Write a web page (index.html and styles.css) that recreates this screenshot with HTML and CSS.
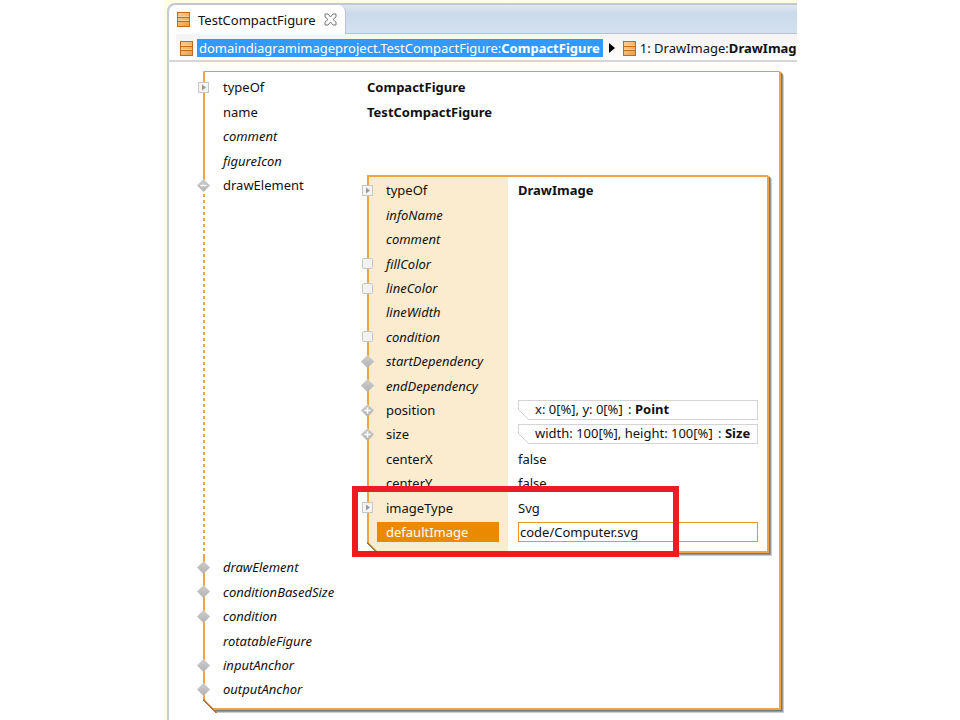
FILE: index.html
```html
<!DOCTYPE html>
<html lang="en">

<head>
  <meta charset="UTF-8">
  <meta name="viewport" content="width=device-width">
  <title>TestCompactFigure</title>
  <link rel="stylesheet" href="styles.css">
</head>

<body>

  <svg class="symbols" aria-hidden="true">
    <defs>
      <linearGradient id="sheet" x1="0" y1="0" x2="1" y2="1">
        <stop offset="0" stop-color="#fbd09a" />
        <stop offset="1" stop-color="#ee9c40" />
      </linearGradient>
      <linearGradient id="grey" x1="0" y1="0" x2="0" y2="1">
        <stop offset="0" stop-color="#cecece" />
        <stop offset="1" stop-color="#b2b2b2" />
      </linearGradient>
    </defs>
    <symbol id="figure" viewBox="0 0 13 15">
      <rect x=".5" y=".5" width="12" height="14" fill="url(#sheet)" stroke="#c06a1c" />
      <path d="M1 5.5h11M1 9.5h11" stroke="#c06a1c" />
      <path d="M1 4.5h11M1 8.5h11" stroke="#fde0b8" stroke-opacity=".6" />
    </symbol>
    <symbol id="arrow" viewBox="0 0 13 13">
      <rect x="1.5" y="1.5" width="10" height="10" fill="#f4f4f4" stroke="#c6c6c6" />
      <path d="M5 3.5v6l4-3z" fill="#999" />
    </symbol>
    <symbol id="box" viewBox="0 0 13 13">
      <rect x="1.5" y="1.5" width="10" height="10" rx="1" fill="#f2f2f2" stroke="#c4c4c4" />
    </symbol>
    <symbol id="diamond" viewBox="0 0 13 13">
      <path d="M6.5 0L13 6.5L6.5 13L0 6.5z" fill="url(#grey)" />
    </symbol>
    <symbol id="plus" viewBox="0 0 13 13">
      <path d="M6.5 0L13 6.5L6.5 13L0 6.5z" fill="url(#grey)" />
      <path d="M3.5 6.5h6M6.5 3.5v6" stroke="#fff" stroke-width="1.5" />
    </symbol>
    <symbol id="minus" viewBox="0 0 13 13">
      <path d="M6.5 0L13 6.5L6.5 13L0 6.5z" fill="url(#grey)" />
      <path d="M3.5 6.5h6" stroke="#fff" stroke-width="1.5" />
    </symbol>
  </svg>

  <main class="editor">

    <header class="tabs">
      <div class="tab">
        <svg class="figure-icon"><use href="#figure" /></svg>
        <span>TestCompactFigure</span>
        <button class="close" type="button" aria-label="Close">
          <svg viewBox="0 0 13 13">
            <path d="M1 1h3l2.500 3L9 1h3v3L9 6.500l3 2.500v3H9L6.500 9L4 12H1V9l3-2.500L1 4z" fill="#fff" stroke="#777" />
          </svg>
        </button>
      </div>
    </header>

    <nav class="breadcrumb">
      <svg class="figure-icon"><use href="#figure" /></svg>
      <a class="current" href="#root">domaindiagramimageproject.TestCompactFigure:<b>CompactFigure</b></a>
      <svg class="separator" viewBox="0 0 6 10"><path d="M0 0l6 5l-6 5z" /></svg>
      <svg class="figure-icon"><use href="#figure" /></svg>
      <a href="#draw">1: DrawImage:<b>DrawImag</b></a>
    </nav>

    <section class="panel outer" id="root">
      <div class="row">
        <button class="marker" type="button" aria-label="Expand"><svg><use href="#arrow" /></svg></button>
        <span class="name">typeOf</span>
        <b>CompactFigure</b>
      </div>
      <div class="row">
        <span class="name">name</span>
        <b>TestCompactFigure</b>
      </div>
      <div class="row empty"><span class="name">comment</span></div>
      <div class="row empty"><span class="name">figureIcon</span></div>

      <div class="row open">
        <button class="marker" type="button" aria-label="Collapse"><svg><use href="#minus" /></svg></button>
        <span class="name">drawElement</span>

        <section class="panel inner" id="draw">
          <div class="row">
            <button class="marker" type="button" aria-label="Expand"><svg><use href="#arrow" /></svg></button>
            <span class="name">typeOf</span>
            <b>DrawImage</b>
          </div>
          <div class="row empty"><span class="name">infoName</span></div>
          <div class="row empty"><span class="name">comment</span></div>
          <div class="row empty">
            <button class="marker" type="button" aria-label="Add"><svg><use href="#box" /></svg></button>
            <span class="name">fillColor</span>
          </div>
          <div class="row empty">
            <button class="marker" type="button" aria-label="Add"><svg><use href="#box" /></svg></button>
            <span class="name">lineColor</span>
          </div>
          <div class="row empty"><span class="name">lineWidth</span></div>
          <div class="row empty">
            <button class="marker" type="button" aria-label="Add"><svg><use href="#box" /></svg></button>
            <span class="name">condition</span>
          </div>
          <div class="row empty">
            <button class="marker" type="button" aria-label="Add"><svg><use href="#diamond" /></svg></button>
            <span class="name">startDependency</span>
          </div>
          <div class="row empty">
            <button class="marker" type="button" aria-label="Add"><svg><use href="#diamond" /></svg></button>
            <span class="name">endDependency</span>
          </div>
          <div class="row">
            <button class="marker" type="button" aria-label="Expand"><svg><use href="#plus" /></svg></button>
            <span class="name">position</span>
            <div class="summary">x: 0[%], y: 0[%] <span class="type">: <b>Point</b></span></div>
          </div>
          <div class="row">
            <button class="marker" type="button" aria-label="Expand"><svg><use href="#plus" /></svg></button>
            <span class="name">size</span>
            <div class="summary">width: 100[%], height: 100[%] <span class="type">: <b>Size</b></span></div>
          </div>
          <div class="row">
            <span class="name">centerX</span>
            <span>false</span>
          </div>
          <div class="row">
            <span class="name">centerY</span>
            <span>false</span>
          </div>
          <div class="row">
            <button class="marker" type="button" aria-label="Expand"><svg><use href="#arrow" /></svg></button>
            <span class="name">imageType</span>
            <span>Svg</span>
          </div>
          <div class="row selected">
            <label class="name" for="defaultImage">defaultImage</label>
            <input id="defaultImage" type="text" value="code/Computer.svg">
          </div>
          <div class="highlight"></div>
        </section>
      </div>

      <div class="row empty">
        <button class="marker" type="button" aria-label="Add"><svg><use href="#diamond" /></svg></button>
        <span class="name">drawElement</span>
      </div>
      <div class="row empty">
        <button class="marker" type="button" aria-label="Add"><svg><use href="#diamond" /></svg></button>
        <span class="name">conditionBasedSize</span>
      </div>
      <div class="row empty">
        <button class="marker" type="button" aria-label="Add"><svg><use href="#diamond" /></svg></button>
        <span class="name">condition</span>
      </div>
      <div class="row empty"><span class="name">rotatableFigure</span></div>
      <div class="row empty">
        <button class="marker" type="button" aria-label="Add"><svg><use href="#diamond" /></svg></button>
        <span class="name">inputAnchor</span>
      </div>
      <div class="row empty">
        <button class="marker" type="button" aria-label="Add"><svg><use href="#diamond" /></svg></button>
        <span class="name">outputAnchor</span>
      </div>
    </section>

  </main>

</body>

</html>
```

FILE: styles.css
```css
* {
  box-sizing: border-box;
  margin: 0;
  padding: 0;
}

body {
  font-family: "Noto Sans", "Open Sans", sans-serif;
  font-size: 13px;
  line-height: 20px;
  color: #111;
  background-color: #fff;
  padding: 0 163px 0 164px;
}

a {
  color: inherit;
  text-decoration: none;
}

button {
  border: none;
  background: none;
  cursor: pointer;
}

.symbols {
  position: absolute;
  width: 0;
  height: 0;
}

/* editor window */
.editor {
  min-height: 100vh;
  padding: 3px 0 0 3px;
  background: linear-gradient(to right, #ffffe1 3px, #c3cad9 3px 5px, #fff 5px) 0 12px no-repeat #ffffe1;
  overflow: hidden;
}

.tabs {
  display: flex;
  height: 31px;
  border-top: 2px solid #c3c7d2;
  border-left: 2px solid #c3cad9;
  border-bottom: 1px solid #b8c1d6;
  border-top-left-radius: 8px;
  background: linear-gradient(#dfe8f2, #cbdaea 30%, #d3e1ef);
}

.tab {
  display: flex;
  align-items: center;
  gap: 8px;
  height: 29px;
  padding: 0 8px;
  border-right: 1px solid #b8c1d6;
  border-radius: 7px 7px 0 0;
  background-color: #fff;
}

.figure-icon {
  flex: none;
  width: 13px;
  height: 15px;
}

.close {
  width: 13px;
  height: 13px;
}

.close svg,
.marker svg {
  display: block;
  width: 13px;
  height: 13px;
}

.breadcrumb {
  display: flex;
  align-items: center;
  gap: 4px;
  height: 28px;
  padding: 2px 0 0 11px;
  border-left: 2px solid #c3cad9;
  border-bottom: 2px solid #d6d6d6;
  background: linear-gradient(to right, #fff 7px, transparent 7px), linear-gradient(#f4f4f4, #fcfcfc);
  white-space: nowrap;
  overflow: hidden;
}

.current {
  height: 18px;
  padding: 0 3px 0 2px;
  line-height: 18px;
  color: #fff;
  background-color: #3399ff;
}

.separator {
  flex: none;
  width: 6px;
  height: 10px;
  margin: 0 4px 0 2px;
}

/* property panels */
.panel {
  position: relative;
  display: grid;
  grid-auto-rows: minmax(24px, auto) minmax(25px, auto) minmax(24px, auto) minmax(25px, auto) minmax(24px, auto);
  border: 2px solid #f0a544;
  border-top-right-radius: 2px;
  box-shadow: 1px 1px 0 #777, 2px 2px 0 #999, 3px 3px 0 #ccc;
  background-color: #fff;
}

/* cut bottom left corner */
.panel::after {
  content: "";
  position: absolute;
  left: -2px;
  bottom: -5px;
  width: 14px;
  height: 14px;
  background: linear-gradient(to top right, #fff 44%, #8a7050 45%, #c9852c 53%, transparent 54%);
}

.outer {
  margin: 9px 16px 9px 36px;
  padding: 3px 10px 7px 0;
  border-top: 1px solid #ea9a2c;
}

.inner {
  padding: 1px 0 7px;
  background: linear-gradient(to right, #fbebcf 139px, #fff 139px);
}

.row {
  position: relative;
  display: grid;
  grid-template-columns: 144px 1fr;
  align-items: center;
  padding-left: 18px;
}

.inner .row {
  grid-template-columns: 132px 1fr;
  padding: 0 9px 0 17px;
}

.empty {
  font-style: italic;
}

.marker {
  position: absolute;
  left: -8px;
  top: 6px;
  z-index: 1;
}

.open {
  align-items: start;
  padding-top: 2px;
  padding-bottom: 2px;
}

/* dotted part of the line next to the open element */
.open::before {
  content: "";
  position: absolute;
  left: -2px;
  top: 18px;
  bottom: 0;
  width: 2px;
  background: repeating-linear-gradient(#fff 0 3px, #f0a544 3px 6px);
}

.summary {
  position: relative;
  height: 20px;
  padding-left: 16px;
  border: 1px solid #d4d4d4;
  line-height: 17px;
  white-space: nowrap;
}

.summary::before {
  content: "";
  position: absolute;
  left: -1px;
  bottom: -1px;
  width: 11px;
  height: 11px;
  background: linear-gradient(to top right, #fff 46%, #d4d4d4 47% 53%, transparent 54%);
}

.type {
  margin-left: 2px;
}

.selected .name {
  height: 20px;
  margin: 0 19px 0 -9px;
  padding-left: 9px;
  color: #fff;
  background-color: #ea8a00;
}

.selected input {
  width: 100%;
  height: 20px;
  padding-left: 1px;
  border: 1px solid #ea9a2c;
  font: inherit;
  color: inherit;
  outline: none;
}

.highlight {
  position: absolute;
  left: -17px;
  right: 88px;
  bottom: -6px;
  height: 71px;
  border: 6px solid #ed1c24;
  z-index: 2;
}
```
